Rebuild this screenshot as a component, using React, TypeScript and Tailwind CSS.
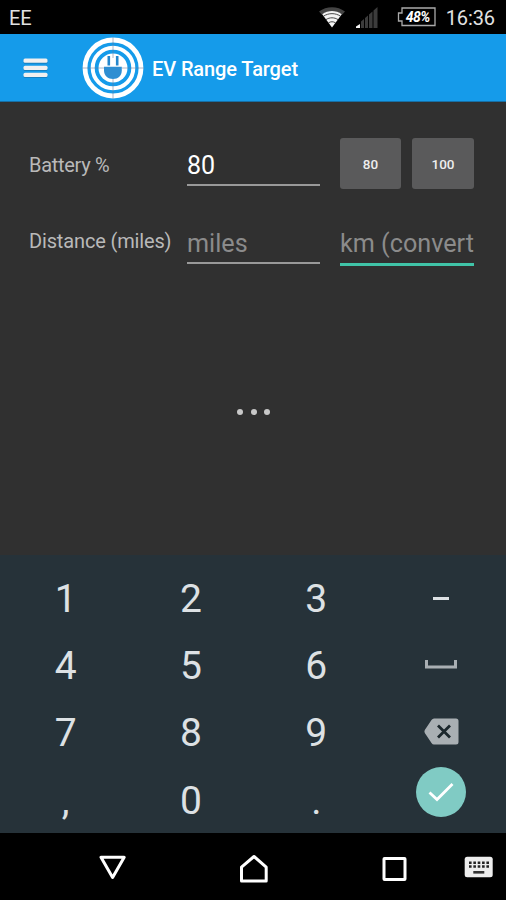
import React from 'react';

const digitRows = [
  ['1', '2', '3'],
  ['4', '5', '6'],
  ['7', '8', '9'],
  [',', '0', '.'],
];

function WifiIcon() {
  return (
    <svg className="w-7 h-6" viewBox="0 0 28 24" fill="none">
      <path d="M1 6.5C8.5 0.8 19.5 0.8 27 6.5L24.3 9.5C18.3 5 9.7 5 3.7 9.5Z" fill="#444" />
      <path d="M4.2 9.3C10 5 18 5 23.8 9.3L14 22.5Z" fill="#f4f4f4" />
      <path d="M5.5 11.2C10.5 7.8 17.5 7.8 22.5 11.2M8 14.6C11.6 12.2 16.4 12.2 20 14.6M10.5 17.8C12.8 16.4 15.2 16.4 17.5 17.8" stroke="#333" strokeWidth="0.9" />
    </svg>
  );
}

function SignalIcon() {
  return (
    <svg className="w-6 h-6" viewBox="0 0 24 24">
      <path d="M1 22V20.5L5 18V22Z" fill="#f4f4f4" />
      <path d="M6 22V15.5L9 13V22ZM10 22V12L13 9.5V22ZM14 22V8.5L17.5 5.5V22ZM18.5 22V4.5L22.5 1V22Z" fill="#3c3c3c" />
    </svg>
  );
}

function BatteryIcon() {
  return (
    <div className="relative w-[39px] h-5">
      <svg className="w-[39px] h-5" viewBox="0 0 39 20" fill="none">
        <path d="M5 1H38V18.5H5V14H1.5V6H5Z" stroke="#aaa" strokeWidth="1.3" />
      </svg>
      <span className="absolute left-[9px] top-[2px] text-[14px] leading-4 font-bold italic tracking-[-0.5px] text-white">48%</span>
    </div>
  );
}

function StatusBar() {
  return (
    <div className="h-[34px] bg-black flex items-center text-[#e2e2e2]">
      <span className="pl-[9px] pt-px text-[20px] leading-6">EE</span>
      <div className="ml-auto flex items-center pr-[11px]">
        <WifiIcon />
        <div className="ml-[9px] pt-0.5">
          <SignalIcon />
        </div>
        <div className="ml-[18px]">
          <BatteryIcon />
        </div>
        <span className="ml-[10px] pt-px text-[20px] leading-6 tracking-[-0.1px]">16:36</span>
      </div>
    </div>
  );
}

function Logo() {
  return (
    <svg className="w-[62px] h-[62px]" viewBox="-31 -31 62 62" fill="none">
      <circle r="28" stroke="#fff" strokeWidth="4.8" />
      <circle r="20.3" stroke="#fff" strokeWidth="4" />
      <circle r="14.5" fill="#fff" />
      <path d="M-4.2 -12V-2.5M4.2 -12V-2.5" stroke="#2487cd" strokeWidth="2.6" />
      <path d="M-9 -1.2H8.8V2.5C8.8 7.5 5 11 0 11S-9 7.5 -9 2.5Z" fill="#2e8ed2" />
      <path d="M-31 0H-9M9 0H31M0 -31V-10M0 11V31" stroke="#667d9c" strokeOpacity="0.6" strokeWidth="0.9" />
    </svg>
  );
}

function AppBar() {
  return (
    <div className="h-[68px] bg-[#159bea] flex items-center border-b border-[#176fa5]">
      <button className="ml-[23px] pt-px">
        <svg className="w-[25px] h-5" viewBox="0 0 25 20">
          <g fill="#176fa5" opacity="0.6">
            <rect x="0.5" y="1.2" width="24" height="4.6" rx="1.5" />
            <rect x="0.5" y="8.4" width="24" height="4.6" rx="1.5" />
            <rect x="0.5" y="15.4" width="24" height="4.6" rx="1.5" />
          </g>
          <g fill="#f0f0f0">
            <rect x="0.5" y="0.6" width="24" height="4.2" rx="1.5" />
            <rect x="0.5" y="7.7" width="24" height="4.2" rx="1.5" />
            <rect x="0.5" y="14.8" width="24" height="4.2" rx="1.5" />
          </g>
        </svg>
      </button>
      <div className="ml-[34px] pt-px">
        <Logo />
      </div>
      <h1 className="ml-2 pt-0.5 text-[20px] leading-6 font-medium tracking-[-0.1px] text-white whitespace-nowrap">EV Range Target</h1>
    </div>
  );
}

function RangeForm() {
  return (
    <div className="h-[453px] bg-[#303030] pl-[29px] pr-8 pt-9">
      <div className="flex h-[51px]">
        <span className="w-[158px] pt-[15px] text-[20px] leading-6 tracking-[-0.3px] text-[#b9b9b9]">Battery %</span>
        <div className="w-[133px] h-12 pt-[14px] border-b-2 border-[#999] text-[25px] leading-7 text-white">80</div>
        <button className="ml-5 pt-px w-[61px] rounded-[3px] bg-[#5a5a5b] text-[13.5px] font-medium text-[#eee]">80</button>
        <button className="ml-[11px] pt-px w-[62px] rounded-[3px] bg-[#5a5a5b] text-[13.5px] font-medium text-[#eee]">100</button>
      </div>
      <div className="flex mt-[27px] h-[50px]">
        <span className="w-[158px] pt-[13px] text-[20px] leading-6 tracking-[-0.15px] text-[#b9b9b9] whitespace-nowrap">Distance (miles)</span>
        <div className="w-[133px] h-12 pt-[14px] border-b-2 border-[#999] text-[25.2px] leading-7 text-[#8b8b8b]">miles</div>
        <div className="ml-5 w-[134px] h-[50px] pt-[14px] border-b-[3px] border-[#40c4a8] text-[25.2px] leading-7 text-[#8b8b8b] whitespace-nowrap overflow-hidden">
          km (convert
        </div>
      </div>
      <div className="flex gap-[7.5px] mt-[143px] pl-[208px]">
        <span className="size-1.5 rounded-full bg-[#c8c8c8]" />
        <span className="size-1.5 rounded-full bg-[#c8c8c8]" />
        <span className="size-1.5 rounded-full bg-[#c8c8c8]" />
      </div>
    </div>
  );
}

function SpaceIcon() {
  return (
    <svg className="w-8 h-[9px]" viewBox="0 0 32 9" fill="none">
      <path d="M1.5 0V7H30.5V0" stroke="#a9afb3" strokeWidth="3" />
    </svg>
  );
}

function BackspaceIcon() {
  return (
    <svg className="w-[35px] h-[27px]" viewBox="0 0 35 27" fill="none">
      <path d="M10 0.5H32Q34.5 0.5 34.5 3V24Q34.5 26.5 32 26.5H10Q8.5 26.5 7.5 25L0.8 15Q0 13.5 0.8 12L7.5 2Q8.5 0.5 10 0.5Z" fill="#a9afb3" />
      <path d="M14 7.5L26 19.5M26 7.5L14 19.5" stroke="#1b272c" strokeWidth="2.8" />
    </svg>
  );
}

function Keyboard() {
  return (
    <div className="h-[278px] bg-[#263239] pt-[10px] pl-[3px] pr-1 flex">
      <div className="w-[376px]">
        {digitRows.map((row) => (
          <div key={row[0]} className="grid grid-cols-3 h-[67.4px]">
            {row.map((key) => (
              <button key={key} className="flex items-center justify-center text-[39px] leading-[46px] text-[#dde1e4]">
                {key}
              </button>
            ))}
          </div>
        ))}
      </div>
      <div className="flex-1 flex flex-col items-center">
        <div className="h-[67.4px] pt-[31.5px]">
          <div className="w-4 h-[3px] bg-[#dde1e4]" />
        </div>
        <div className="h-[67.4px] pt-[28px]">
          <SpaceIcon />
        </div>
        <div className="h-[67.4px] pt-[18.5px] pl-0.5">
          <BackspaceIcon />
        </div>
        <button className="size-[50px] rounded-full bg-[#80cbc4] flex items-center justify-center">
          <svg className="w-[26px] h-5" viewBox="0 0 26 20" fill="none">
            <path d="M1.5 10.5L9 17.5L24.5 2" stroke="#fff" strokeWidth="2.8" />
          </svg>
        </button>
      </div>
    </div>
  );
}

function NavBar() {
  return (
    <div className="h-[67px] bg-black flex pl-[99px] pt-[20px]">
      <svg className="w-7 h-8" viewBox="0 0 28 32" fill="none">
        <path d="M2 4.2H25.2L13.6 24.5Z" stroke="#fff" strokeWidth="3" strokeLinejoin="round" />
      </svg>
      <svg className="ml-[112px] w-[30px] h-8" viewBox="0 0 30 32" fill="none">
        <path d="M2.5 28V14.2L15 3.5L27.2 14.2V28Z" stroke="#fff" strokeWidth="3" strokeLinejoin="round" />
      </svg>
      <svg className="ml-[112px] w-7 h-8" viewBox="0 0 28 32" fill="none">
        <rect x="3" y="5.5" width="21" height="21" rx="0.5" stroke="#fff" strokeWidth="3" />
      </svg>
      <svg className="ml-[55px] w-[30px] h-8" viewBox="0 0 30 32">
        <rect x="0.7" y="3.8" width="28" height="20.5" rx="2.5" fill="#ededed" />
        <path d="M5 9.7H25M5 13.5H25" stroke="#222" strokeWidth="2.4" strokeDasharray="2.6 1.75" />
        <rect x="9.3" y="18" width="11" height="2.6" fill="#333" />
      </svg>
    </div>
  );
}

export default function App() {
  return (
    <div className="w-[506px] h-[900px] overflow-hidden bg-black font-['Roboto',sans-serif]">
      <StatusBar />
      <AppBar />
      <RangeForm />
      <Keyboard />
      <NavBar />
    </div>
  );
}
